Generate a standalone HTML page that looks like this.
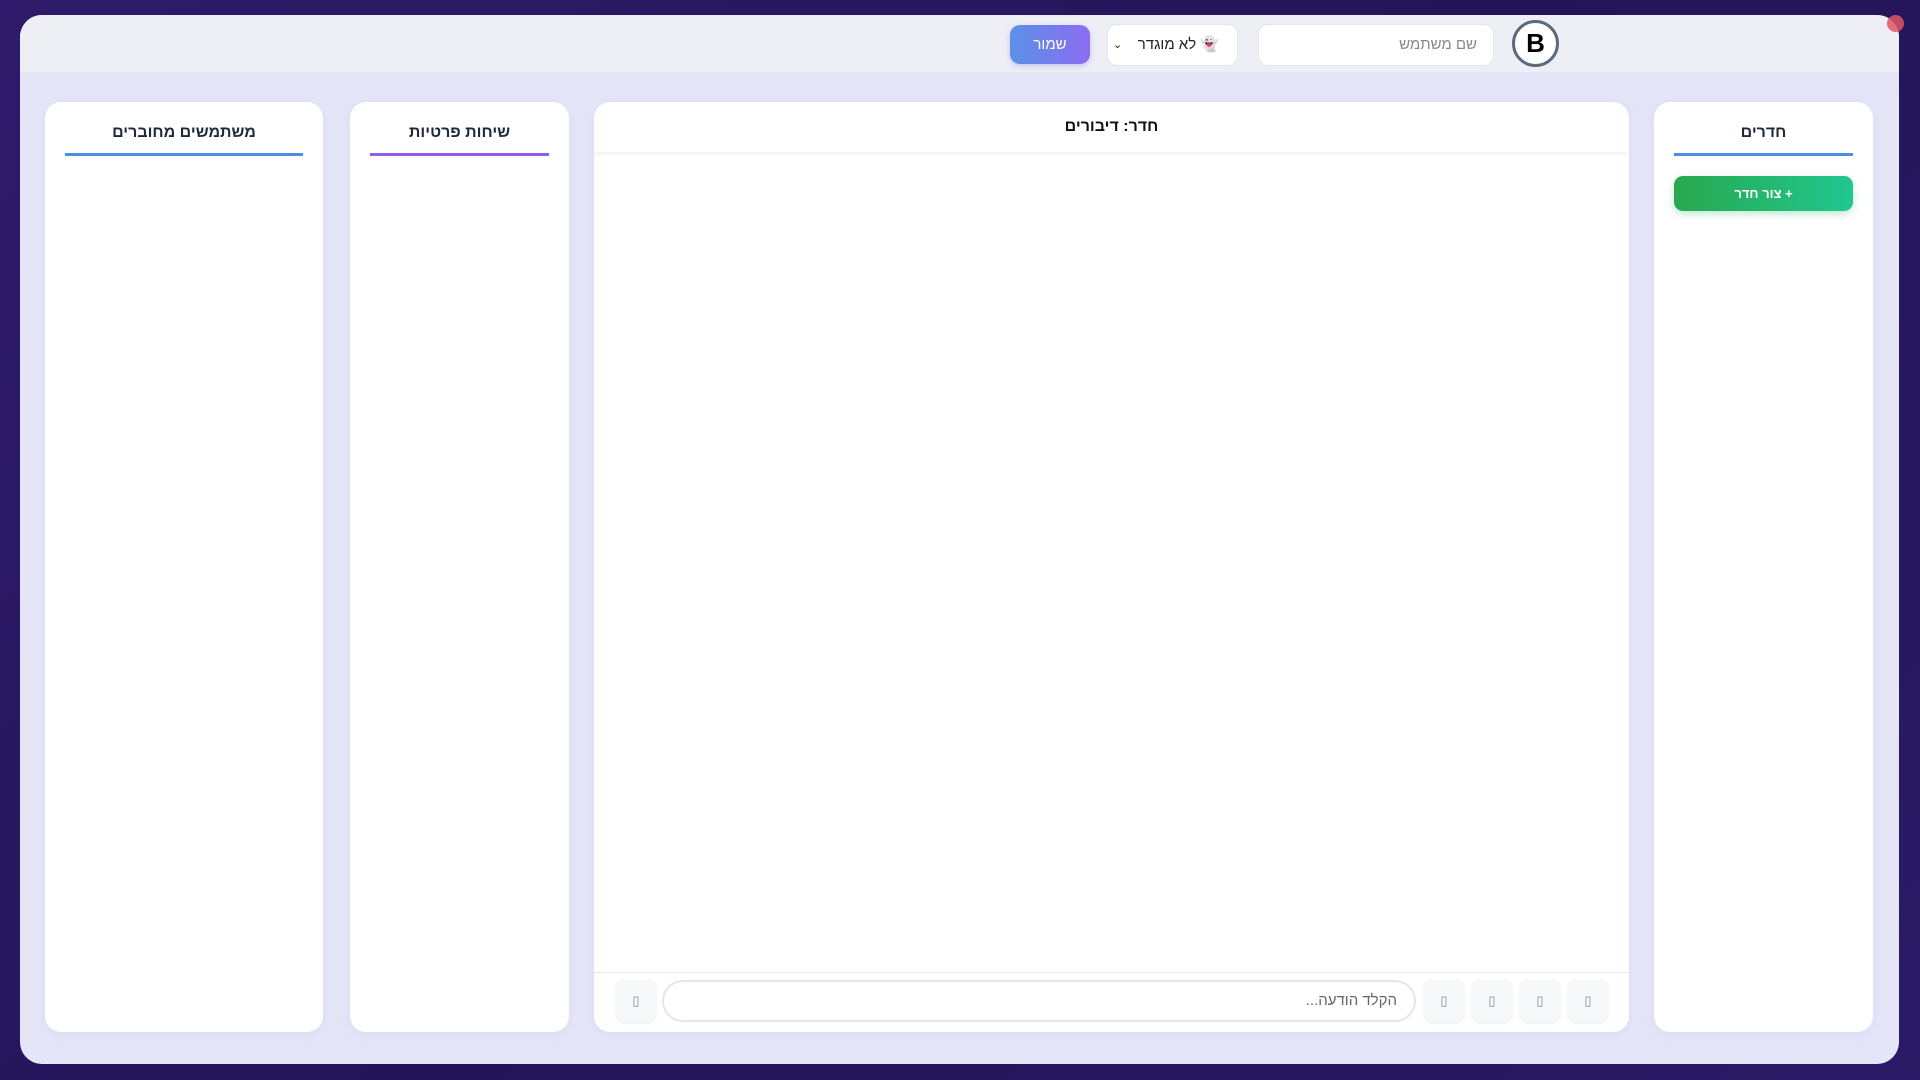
<!DOCTYPE html>
<html lang="he" dir="rtl"><head><meta charset="utf-8"><style>
*{box-sizing:border-box;margin:0;padding:0}
body{width:1920px;height:1080px;overflow:hidden;background:linear-gradient(135deg,#2e1b6b,#231558 50%,#2a1a66);font-family:"Liberation Sans","Noto Sans CJK SC",sans-serif;position:relative}
.app{position:absolute;left:20px;top:15px;width:1879px;height:1049px;border-radius:22px;background:#e5e5f8;overflow:hidden}
.hdr{position:absolute;left:0;top:0;width:100%;height:57px;background:#eeeff5}
.p{position:absolute;background:#fff;border-radius:16px;top:87px;height:930px;box-shadow:0 2px 10px rgba(100,100,200,.08)}
.t{text-align:center;font-size:16px;font-weight:bold;color:#1f2937;margin-top:22px}
.ul{position:absolute;left:20px;right:20px;top:51px;height:3px}
.ib{position:absolute;top:965px;width:40px;height:42px;background:#f7f8fa;border-radius:8px;box-shadow:0 1px 3px rgba(0,0,0,.08);color:#888;font-size:13px;text-align:center;line-height:42px}
</style></head><body>
<div class="app">
<div class="hdr"></div>
<div style="position:absolute;left:990px;top:10px;width:80px;height:39px;border-radius:10px;background:linear-gradient(90deg,#5b91e8,#8b6cf2);color:#fff;font-size:15px;text-align:center;line-height:39px;box-shadow:0 2px 6px rgba(100,100,240,.3)">שמור</div>
<div style="position:absolute;left:1087px;top:9px;width:131px;height:42px;border-radius:10px;background:#fff;border:1px solid #e3e6ef;font-size:15px;color:#222;line-height:40px;padding-right:18px">👻 לא מוגדר<span style="position:absolute;left:5px;top:0;font-size:11px">⌄</span></div>
<div style="position:absolute;left:1238px;top:9px;width:236px;height:42px;border-radius:10px;background:#fff;border:1px solid #e3e6ef;font-size:15px;color:#888;line-height:40px;padding-right:16px">שם משתמש</div>
<div style="position:absolute;left:1492px;top:5px;width:47px;height:47px;border-radius:50%;background:#fff;border:3px solid #5c6a80;font-size:26px;font-weight:bold;text-align:center;line-height:41px;color:#000">B</div>
<div class="p" style="left:25px;width:278px"><div class="t">משתמשים מחוברים</div><div class="ul" style="background:#4a8fe0"></div></div>
<div class="p" style="left:330px;width:219px"><div class="t">שיחות פרטיות</div><div class="ul" style="background:#8f5cf0"></div></div>
<div class="p" style="left:574px;width:1035px;overflow:hidden">
<div style="height:50px;box-shadow:0 2px 4px rgba(0,0,0,.06);text-align:center;font-size:16px;font-weight:bold;color:#111;line-height:50px">חדר: דיבורים</div>
<div style="position:absolute;left:0;right:0;top:870px;border-top:1px solid #e3e8f0"></div>
</div>
<div style="position:absolute;left:642px;top:965px;width:754px;height:42px;border:2px solid #e0e6f2;border-radius:21px;background:#fff;font-size:15px;color:#666;line-height:38px;padding-right:17px">הקלד הודעה...</div>
<div class="ib" style="left:1548px">▯</div><div class="ib" style="left:1500px">▯</div><div class="ib" style="left:1452px">▯</div><div class="ib" style="left:1404px">▯</div><div class="ib" style="left:596px">▯</div>
<div class="p" style="left:1634px;width:219px"><div class="t">חדרים</div><div class="ul" style="background:#4a8fe0"></div>
<div style="position:absolute;left:20px;right:20px;top:74px;height:35px;border-radius:9px;background:linear-gradient(90deg,#28a84f,#20c78f);color:#fff;font-size:13px;font-weight:bold;text-align:center;line-height:35px;box-shadow:0 3px 8px rgba(40,180,100,.3)">+ צור חדר</div></div>
</div>
<div style="position:absolute;left:1887px;top:15px;width:17px;height:17px;border-radius:50%;background:#e05566;opacity:.85"></div>
</body></html>
